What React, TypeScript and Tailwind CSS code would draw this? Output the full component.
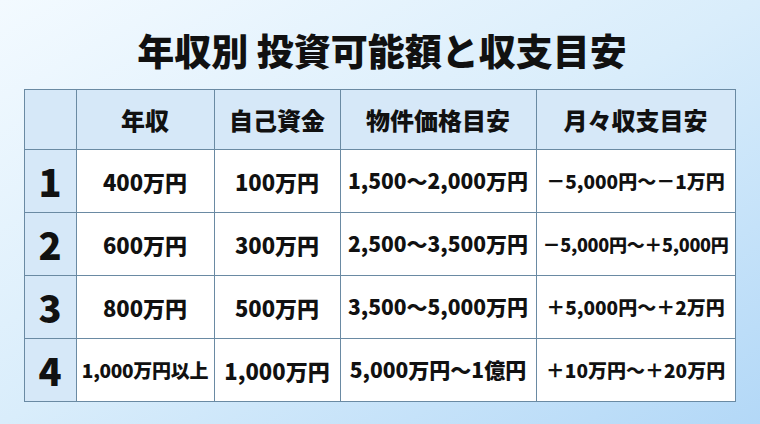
const headers = ['年収', '自己資金', '物件価格目安', '月々収支目安']

const rows = [
  { no: '1', cells: ['400万円', '100万円', '1,500〜2,000万円', '－5,000円〜－1万円'] },
  { no: '2', cells: ['600万円', '300万円', '2,500〜3,500万円', '－5,000円〜＋5,000円'] },
  { no: '3', cells: ['800万円', '500万円', '3,500〜5,000万円', '＋5,000円〜＋2万円'] },
  { no: '4', cells: ['1,000万円以上', '1,000万円', '5,000万円〜1億円', '＋10万円〜＋20万円'] },
]

const cell = 'flex items-center justify-center border-r-[1.5px] border-b-[1.5px] border-[#6a8aa3] whitespace-nowrap'

function sizeFor(c: string, i: number) {
  if (c === '1,000万円以上') return 'text-[19px] tracking-[-0.3px]'
  if (i === 3) return c.length > 13 ? 'text-[18px] tracking-[-0.3px]' : 'text-[19px]'
  if (i === 2) return 'text-[21px]'
  return 'text-[22px]'
}

export default function App() {
  return (
    <div
      className="flex h-[424px] w-[760px] flex-col items-center bg-gradient-to-br from-[#f3faff] via-[#d9edfb] to-[#b3d8f7] text-[#111]"
      style={{ fontFamily: '"Noto Sans CJK JP", "Noto Sans", sans-serif' }}
    >
      <h1 className="mt-[26px] h-[48px] pl-[4px] text-[37px] leading-[48px] font-black">
        年収別 投資可能額と収支目安
      </h1>
      <div className="mt-[15px] ml-[-1px] grid grid-cols-[52px_138px_126px_196px_199px] grid-rows-[60px_63px_63px_63px_63px] border-t-[1.5px] border-l-[1.5px] border-[#6a8aa3] font-black">
        <div className={`${cell} bg-[#d6e8f8]`} />
        {headers.map((h) => (
          <div key={h} className={`${cell} bg-[#d6e8f8] text-[24px]`}>
            {h}
          </div>
        ))}
        {rows.map((r) => (
          <>
            <div key={r.no} className={`${cell} bg-[#d6e8f8] text-[38px] leading-none`}>
              {r.no}
            </div>
            {r.cells.map((c, i) => (
              <div key={r.no + i} className={`${cell} bg-white ${sizeFor(c, i)}`}>
                {c}
              </div>
            ))}
          </>
        ))}
      </div>
    </div>
  )
}
